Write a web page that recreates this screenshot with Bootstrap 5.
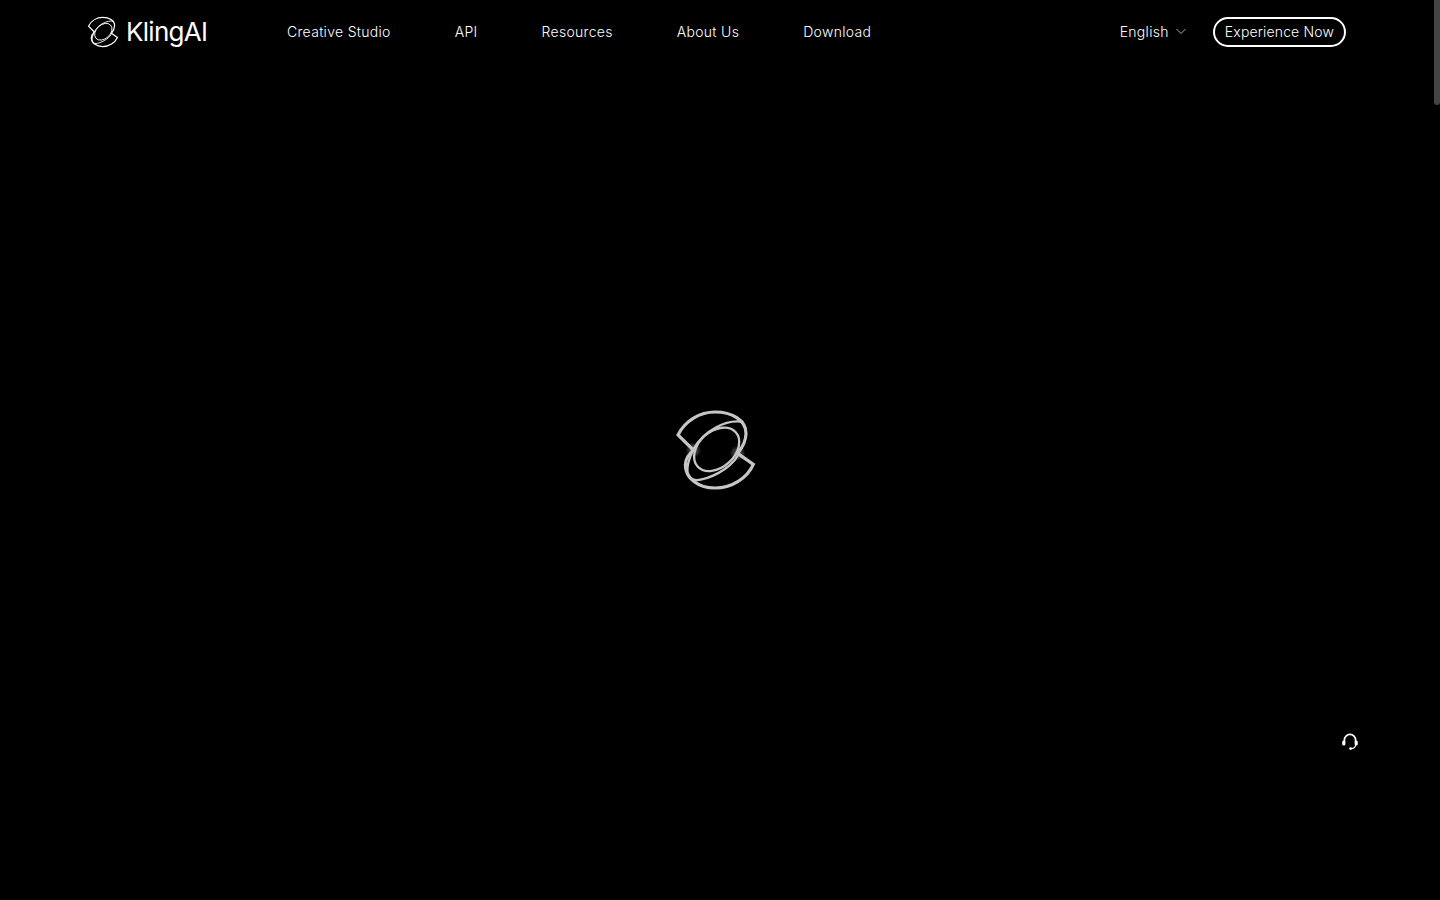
<!DOCTYPE html>
<html lang="en">
<head>
  <meta charset="UTF-8">
  <meta name="viewport" content="width=device-width, initial-scale=1">
  <title>KlingAI</title>
  <link href="https://cdn.jsdelivr.net/npm/bootstrap@5.3.2/dist/css/bootstrap.min.css" rel="stylesheet">
  <style>
    html, body { height: 100%; overflow: hidden; }
    body { background: #000; color: #fff; font-family: Inter, "Liberation Sans", sans-serif; }

    .page-wrap { width: 1434px; height: 900px; }

    .top-bar { height: 64px; padding: 0 88px; position: relative; }
    .brand-link { width: 199px; margin-left: -1px; margin-right: 1px; color: #fff; text-decoration: none; }
    .brand-text { font-size: 26px; font-weight: 400; letter-spacing: -.7px; line-height: 1; margin-left: 7px; }
    .brand-mark { width: 32px; height: 32px; }

    .main-links { gap: 64px; margin-top: -2px; }
    .main-links a, .lang-pick { color: #fff; font-size: 14px; font-weight: 300; letter-spacing: .3px; text-decoration: none; }

    .btn-try {
      color: #fff; font-size: 14px; font-weight: 300; letter-spacing: .15px; line-height: 1;
      border: 2px solid #fff; border-radius: 15px; padding: 6px 10px; height: 30px;
    }
    .btn-try:hover { color: #fff; border-color: #fff; }
    .lang-pick { margin-right: 26px; margin-top: -2px; }
    .lang-pick svg { margin-left: 2px; }

    .loader-area { height: 900px; margin-top: -64px; }
    .loader-logo { width: 114px; height: 100px; color: #c6c6c6; }

    .help-btn { position: fixed; left: 1341px; top: 733px; width: 18px; height: 18px; }
    .thumb-bar { position: fixed; right: 0; top: 0; width: 6px; height: 105px; background: #444; border-radius: 0 0 3px 3px; }
  </style>
</head>
<body>

<svg width="0" height="0" class="position-absolute">
  <defs>
    <symbol id="klingMark" viewBox="45 25 245 250">
      <path stroke-width="9.5" d="M100 150 L54 105 C75 62 120 36 165 36 C215 36 258 60 258 100 C258 125 247 143 233 160"/>
      <path stroke-width="9.5" d="M233 160 L280 193 C262 234 215 264 165 264 C115 264 76 235 76 195 C76 176 86 165 100 150"/>
      <path stroke-width="7" d="M250 66 C200 56 130 92 100 148 C88 172 78 205 84 222 C90 240 108 243 125 238 C170 228 228 192 237 156"/>
      <ellipse stroke-width="7" cx="170" cy="148" rx="77" ry="54" transform="rotate(-42 170 148)"/>
    </symbol>
    <radialGradient id="jointGlow">
      <stop offset="0" stop-color="#fff" stop-opacity=".45"/>
      <stop offset="1" stop-color="#fff" stop-opacity="0"/>
    </radialGradient>
  </defs>
</svg>

<div class="page-wrap">
  <header class="top-bar d-flex align-items-center">
    <a href="#" class="brand-link d-flex align-items-center">
      <svg class="brand-mark" fill="none" stroke="currentColor"><use href="#klingMark"/></svg>
      <span class="brand-text">KlingAI</span>
    </a>
    <nav class="main-links d-flex flex-grow-1 align-items-center">
      <a href="#">Creative Studio</a>
      <a href="#">API</a>
      <a href="#">Resources</a>
      <a href="#">About Us</a>
      <a href="#">Download</a>
    </nav>
    <div class="d-flex align-items-center">
      <a href="#" class="lang-pick d-flex align-items-center gap-1">
        English
        <svg width="12" height="12" viewBox="0 0 12 12" fill="none" stroke="#aaa" stroke-width="1"><path d="M1.5 4 L6 8.5 L10.5 4"/></svg>
      </a>
      <a href="#" class="btn btn-try">Experience Now</a>
    </div>
  </header>

  <main class="loader-area d-flex align-items-center justify-content-center">
    <svg class="loader-logo" viewBox="0 0 342 300" fill="none" stroke="currentColor">
      <circle cx="100" cy="150" r="24" fill="url(#jointGlow)" stroke="none"/>
      <circle cx="233" cy="160" r="24" fill="url(#jointGlow)" stroke="none"/>
      <use href="#klingMark" x="45" y="25" width="245" height="250"/>
    </svg>
  </main>
</div>

<div class="help-btn">
  <svg class="d-block" width="18" height="18" viewBox="0 0 18 18" fill="none" stroke="#fff" stroke-width="1.7">
    <path d="M3.4 9 V7 A5.6 5.6 0 0 1 14.6 7 V9"/>
    <rect x="1.2" y="7.6" width="3.2" height="5" rx="1.5" fill="#fff" stroke="none"/>
    <rect x="13.6" y="7.6" width="3.2" height="5" rx="1.5" fill="#fff" stroke="none"/>
    <path d="M14.6 12 C14.4 14.6 12.6 15.6 10 15.6" stroke-width="1.2"/>
    <circle cx="9.6" cy="15.6" r="1.4" fill="#fff" stroke="none"/>
  </svg>
</div>
<div class="thumb-bar"></div>

<script src="https://cdn.jsdelivr.net/npm/bootstrap@5.3.2/dist/js/bootstrap.bundle.min.js"></script>
</body>
</html>
